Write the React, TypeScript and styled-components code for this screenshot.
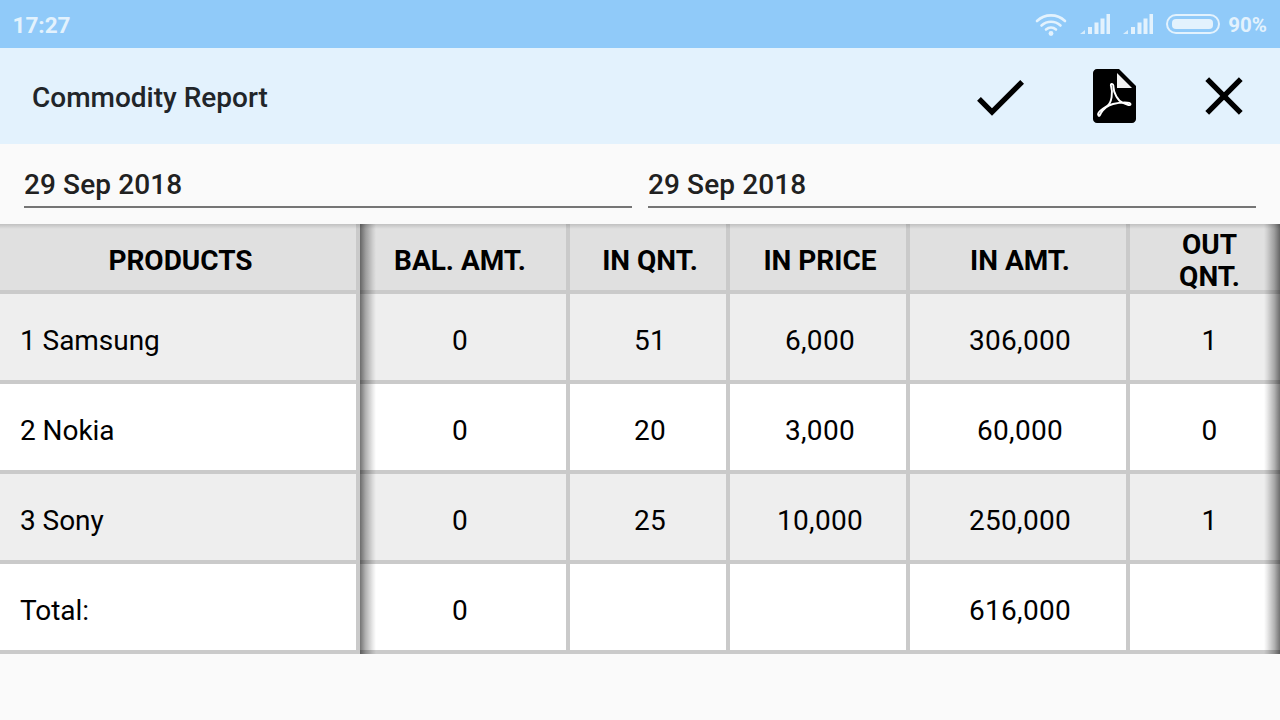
import React from "react";
import styled, { createGlobalStyle } from "styled-components";

const Global = createGlobalStyle`
  html, body { margin: 0; padding: 0; background: #fafafa; }
  body { font-family: Roboto, "Liberation Sans", sans-serif; }
`;
const Page = styled.div`
  width: 1280px; height: 720px; overflow: hidden; background: #fafafa;
  display: flex; flex-direction: column;
`;
const StatusBar = styled.div`
  height: 48px; background: #90caf9; display: flex; align-items: center;
  padding: 0 13px 0 12.500px; color: #e3f2fd;
`;
const Time = styled.span`font-size: 22.500px; font-weight: 700; flex: 1; padding-top: 2px;`;
const StatusIcons = styled.div`display: flex; align-items: center;`;
const Percent = styled.span`font-size: 20.500px; font-weight: 700; margin-left: 8px; padding-top: 1px;`;
const AppBar = styled.div`
  height: 96px; background: #e3f2fd; display: flex; align-items: center;
  padding: 0 24px 0 32px;
`;
const Title = styled.div`font-size: 28px; font-weight: 500; color: #212529; flex: 1; padding-top: 2px;`;
const ActionIcon = styled.svg<{ $ml?: number }>`
  display: block; flex: none; margin-left: ${(p) => p.$ml ?? 0}px;
`;
const DateRow = styled.div`
  height: 80px; display: flex; gap: 16px; padding: 0 24px; box-sizing: border-box;
`;
const DateField = styled.div`
  flex: 1; height: 64px; box-sizing: border-box; border-bottom: 2px solid #757575;
  font-size: 28px; font-weight: 500; color: #212121; display: flex; align-items: flex-end;
  padding-bottom: 5px; letter-spacing: 0.1px;
`;
const TableWrap = styled.div`position: relative; width: 1280px;`;
const Table = styled.div`
  display: grid;
  grid-template-columns: 356px 206px 156px 176px 216px 150px;
  grid-template-rows: 66px 86px 86px 86px 86px;
  gap: 4px; padding-bottom: 4px; background: #cacaca;
`;
const Head = styled.div<{ $l: number; $r: number }>`
  background: #e0e0e0; color: #000; font-size: 28px; font-weight: 700; line-height: 32px;
  display: flex; align-items: center; justify-content: center; text-align: center;
  padding: 8px ${(p) => p.$r}px 0 ${(p) => p.$l}px;
`;
const Cell = styled.div<{ $alt?: boolean; $left?: boolean; $l: number; $r: number }>`
  background: ${(p) => (p.$alt ? "#eeeeee" : "#ffffff")}; color: #000;
  font-size: 28px; display: flex; align-items: center;
  justify-content: ${(p) => (p.$left ? "flex-start" : "center")};
  letter-spacing: ${(p) => (p.$left ? "-0.05px" : "0.3px")};
  padding: 6px ${(p) => p.$r}px 0 ${(p) => p.$l}px;
`;
const TopShade = styled.div`
  position: absolute; left: 0; right: 0; top: 0; height: 5px; pointer-events: none;
  background: linear-gradient(to bottom, rgba(0,0,0,.14), rgba(0,0,0,0));
`;
const LeftShade = styled.div`
  position: absolute; left: 360px; top: 0; bottom: 0; width: 16px;
  background: linear-gradient(to right, rgba(0,0,0,.55), rgba(0,0,0,.3) 35%, rgba(0,0,0,.09) 78%, rgba(0,0,0,0));
`;
const RightShade = styled.div`
  position: absolute; right: 0; top: 0; bottom: 0; width: 16px;
  background: linear-gradient(to left, rgba(0,0,0,.55), rgba(0,0,0,.3) 35%, rgba(0,0,0,.09) 78%, rgba(0,0,0,0));
`;

const Wifi = () => (
  <svg width="32" height="24" viewBox="0 0 32 24" fill="none" stroke="#e3f2fd" strokeLinecap="round" style={{ display: "block" }}>
    <path d="M2 9C10 1.500 22 1.500 30 9" strokeWidth="2.600" />
    <path d="M6.500 13.500C12 8.500 20 8.500 25.500 13.500" strokeWidth="2.600" />
    <path d="M11 17.500C14 15 18 15 21 17.500" strokeWidth="2.600" />
    <circle cx="16" cy="21.500" r="2.400" fill="#e3f2fd" stroke="none" />
  </svg>
);
const Signal = ({ ml }: { ml: number }) => (
  <svg width="30" height="20" viewBox="0 0 30 20" fill="#e3f2fd" style={{ display: "block", marginLeft: ml }}>
    <path d="M0 20L5 16V20Z" opacity=".85" />
    <rect x="8" y="13" width="4" height="7" />
    <rect x="14.500" y="8.500" width="4" height="11.500" />
    <rect x="20.500" y="4.500" width="4" height="15.500" />
    <rect x="26.500" y="0" width="3.500" height="20" />
  </svg>
);
const Battery = () => (
  <svg width="54" height="20" viewBox="0 0 54 20" style={{ display: "block", marginLeft: 13 }}>
    <rect x="1" y="1" width="52" height="18" rx="9" fill="none" stroke="#e3f2fd" strokeWidth="2" />
    <rect x="6" y="5" width="41" height="10" rx="4" fill="#e3f2fd" />
  </svg>
);

const Check = () => (
  <ActionIcon width="64" height="64" viewBox="0 0 24 24">
    <path d="M9 16.570L4.830 12.400l-1.420 1.410L9 19.400 21 7.400l-1.410-1.410z" fill="#000" />
  </ActionIcon>
);
const Close = () => (
  <ActionIcon width="64" height="64" viewBox="0 0 24 24" $ml={55}>
    <path d="M19 6.410L17.590 5 12 10.590 6.410 5 5 6.410 10.590 12 5 17.590 6.410 19 12 13.410 17.590 19 19 17.590 13.410 12z" fill="#000" />
  </ActionIcon>
);
const Pdf = () => (
  <ActionIcon width="44" height="54" viewBox="0 0 44 54" $ml={61}>
    <path d="M4 0H26L43 17V50C43 52.200 41.200 54 39 54H4C1.800 54 0 52.200 0 50V4C0 1.800 1.800 0 4 0Z" fill="#000" />
    <path d="M24 4L39 19H24Z" fill="#fff" opacity=".95" />
    <path
      d="M5.500 46.500C3.500 44 9 40 14 37C19 34 20 23 18 17C17 14 20.500 14 20.500 18C20.500 24 25 32 30 34C34 36 38 37 37.500 35C37 33 28 33 20 35C14 36.500 10.500 40 8 44C7 46 6.500 47.500 5.500 46.500Z"
      fill="none" stroke="#fff" strokeWidth="1.900" strokeLinejoin="round"
    />
  </ActionIcon>
);

const rows = [
  ["1 Samsung", "0", "51", "6,000", "306,000", "1"],
  ["2 Nokia", "0", "20", "3,000", "60,000", "0"],
  ["3 Sony", "0", "25", "10,000", "250,000", "1"],
  ["Total:", "0", "", "", "616,000", ""],
];
const heads = ["PRODUCTS", "BAL. AMT.", "IN QNT.", "IN PRICE", "IN AMT.", "OUT\nQNT."];
const pads = [
  { l: 5, r: 0 },
  { l: 0, r: 6 },
  { l: 4, r: 0 },
  { l: 4, r: 0 },
  { l: 4, r: 0 },
  { l: 9, r: 0 },
];

export default function App() {
  return (
    <Page>
      <Global />
      <StatusBar>
        <Time>17:27</Time>
        <StatusIcons>
          <Wifi />
          <Signal ml={13} />
          <Signal ml={13} />
          <Battery />
          <Percent>90%</Percent>
        </StatusIcons>
      </StatusBar>
      <AppBar>
        <Title>Commodity Report</Title>
        <Check />
        <Pdf />
        <Close />
      </AppBar>
      <DateRow>
        <DateField>29 Sep 2018</DateField>
        <DateField>29 Sep 2018</DateField>
      </DateRow>
      <TableWrap>
        <Table>
          {heads.map((h, j) => (
            <Head key={h} $l={pads[j].l} $r={pads[j].r}>
              {h.includes("\n") ? (
                <span>
                  {h.split("\n")[0]}
                  <br />
                  {h.split("\n")[1]}
                </span>
              ) : (
                h
              )}
            </Head>
          ))}
          {rows.map((r, i) =>
            r.map((c, j) => (
              <Cell
                key={`${i}-${j}`}
                $alt={i % 2 === 0 && i < 3}
                $left={j === 0}
                $l={j === 0 ? 20 : pads[j].l}
                $r={pads[j].r}
              >
                {c}
              </Cell>
            ))
          )}
        </Table>
        <TopShade />
        <LeftShade />
        <RightShade />
      </TableWrap>
    </Page>
  );
}
